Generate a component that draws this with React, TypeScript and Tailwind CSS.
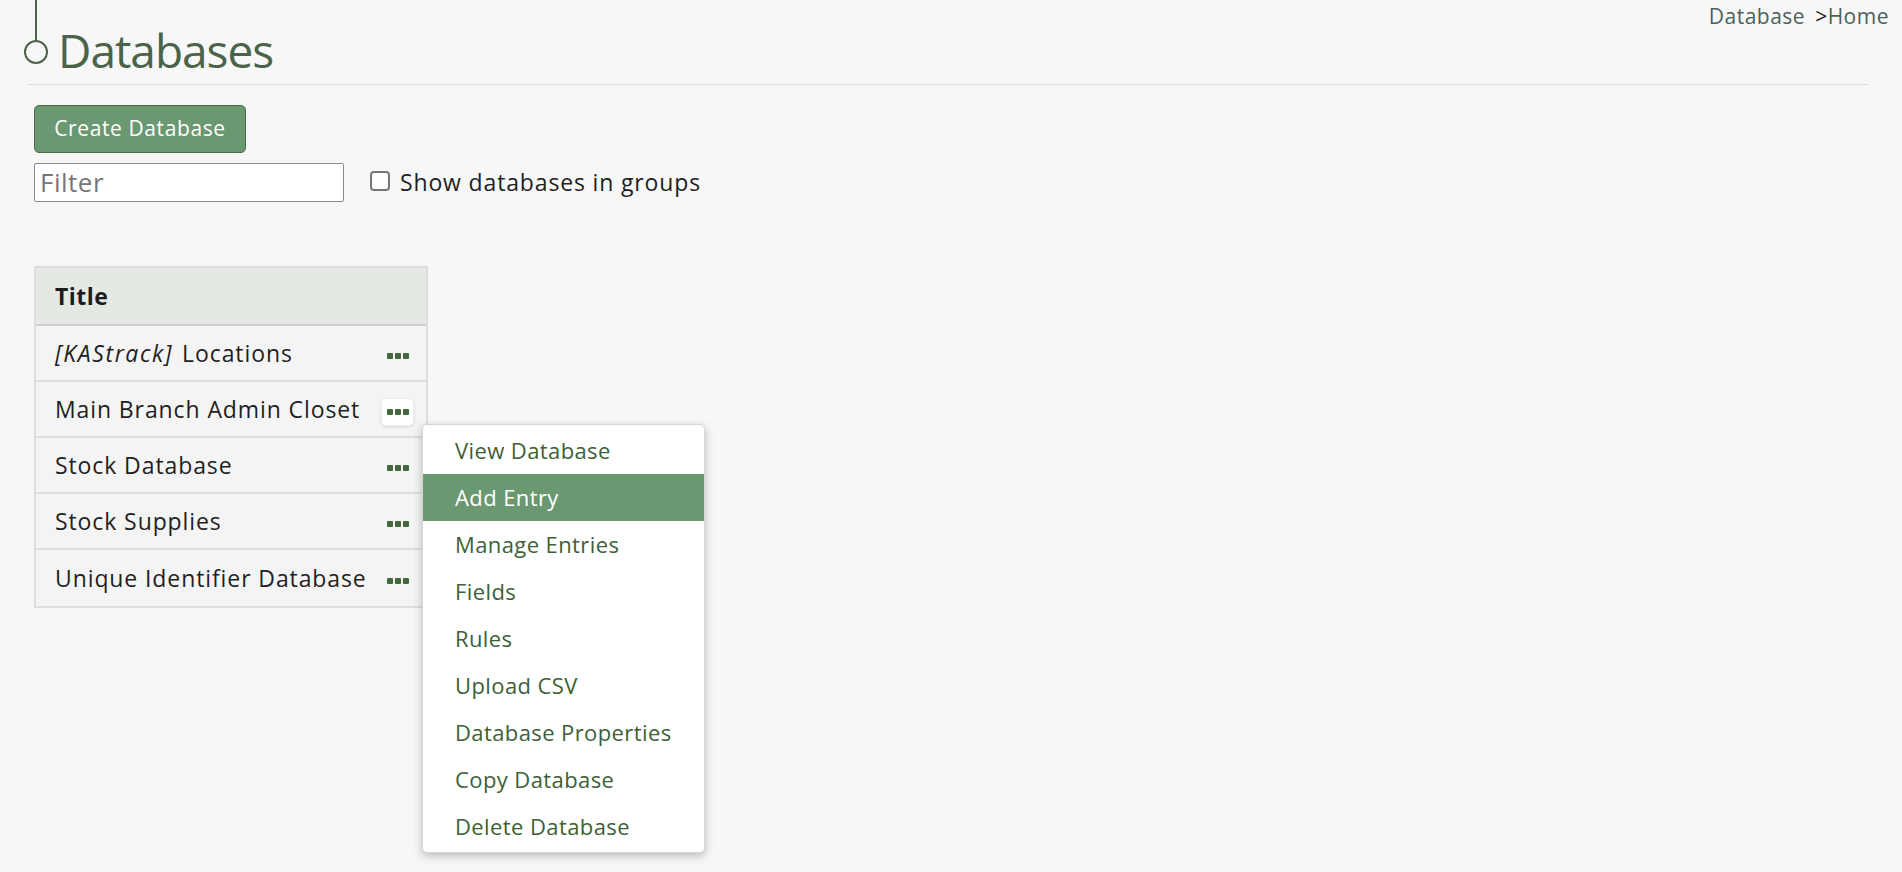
import { useState } from "react";

const databases = [
  { tag: "[KAStrack]", name: "Locations" },
  { name: "Main Branch Admin Closet" },
  { name: "Stock Database" },
  { name: "Stock Supplies" },
  { name: "Unique Identifier Database" },
];

const menuItems = [
  "View Database",
  "Add Entry",
  "Manage Entries",
  "Fields",
  "Rules",
  "Upload CSV",
  "Database Properties",
  "Copy Database",
  "Delete Database",
];

function Dots() {
  return (
    <svg width="22" height="6" viewBox="0 0 22 6" className="block">
      <rect x="0" y="0" width="6" height="6" rx="1" fill="#3f6a3c" />
      <rect x="8" y="0" width="6" height="6" rx="1" fill="#3f6a3c" />
      <rect x="16" y="0" width="6" height="6" rx="1" fill="#3f6a3c" />
    </svg>
  );
}

export default function App() {
  const [openRow] = useState(1);
  const [hovered, setHovered] = useState("Add Entry");

  return (
    <div className="min-h-[872px] bg-[#f7f7f7] font-['Open_Sans',sans-serif] text-[#1f1f1f]">
      {/* header */}
      <div className="flex justify-between pl-6 pr-[13px]">
        <div className="flex items-start">
          <div className="flex flex-col items-center">
            <div className="w-[2px] h-[40px] bg-[#4a6349]" />
            <div className="w-[24px] h-[24px] rounded-full border-2 border-[#4a6349]" />
          </div>
          <h1 className="ml-[10px] mt-[20px] text-[46px] leading-[60px] tracking-[-1px] text-[#4a6349]">Databases</h1>
        </div>
        <div className="pt-[1px] text-[21px] leading-[30px] tracking-[0.5px] text-[#4d6159]">
          Database <span className="ml-[4px] text-[#222]">&gt;</span>Home
        </div>
      </div>
      <div className="ml-[28px] mr-[34px] mt-[4px] border-t-[1.5px] border-[#dcdcdc]" />

      <div className="pl-[34px] pt-[20px]">
        <button className="h-[48px] w-[212px] rounded-[5px] border border-[#4a6a4d] bg-[#6a9871] text-[21px] tracking-[0.6px] text-white">
          Create Database
        </button>
        <div className="mt-[10px] flex items-center">
          <input
            placeholder="Filter"
            className="h-[39px] w-[310px] rounded-[2px] border border-[#8a8a8a] bg-white px-[5px] text-[26px] tracking-[0.5px] placeholder:text-[#767676] outline-none"
          />
          <label className="ml-[26px] flex items-center gap-[10px] text-[23px] tracking-[0.85px] text-[#1f1f1f]">
            <span className="mb-[4px] h-[20px] w-[20px] rounded-[4px] border-2 border-[#777] bg-white" />
            Show databases in groups
          </label>
        </div>

        {/* table */}
        <div className="relative mt-[64px] w-[394px]">
          <div className="border-2 border-[#dedede]">
            <div className="flex h-[58px] items-center border-b-2 border-[#cfcfcf] bg-[#e4e9e4] px-[19px] text-[23px] tracking-[0.5px] font-bold text-[#1c1c1c]">
              Title
            </div>
            {databases.map((db, i) => (
              <div
                key={db.name}
                className={`flex h-[56px] items-center justify-between bg-[#f4f4f4] pl-[19px] pr-[12px] text-[23px] tracking-[0.9px] ${i < databases.length - 1 ? "border-b-2 border-[#dedede]" : ""}`}
              >
                <span className="whitespace-nowrap">
                  {db.tag && <i className="mr-[9px] tracking-[1.6px]">{db.tag}</i>}
                  {db.name}
                </span>
                <span
                  className={`mt-[6px] flex h-[28px] w-[33px] items-center justify-center rounded-[5px] ${i === openRow ? "bg-white shadow-[0_1px_3px_rgba(0,0,0,0.12)] border border-[#eeeeee]" : ""}`}
                >
                  <Dots />
                </span>
              </div>
            ))}
          </div>

          {/* dropdown */}
          <div className="absolute left-[388px] top-[158px] w-[283px] rounded-[5px] border border-[#d6d6d6] bg-white py-[2px] shadow-[0_3px_10px_rgba(0,0,0,0.25)]">
            {menuItems.map((item) => (
              <div
                key={item}
                onMouseEnter={() => setHovered(item)}
                className={`flex h-[47px] items-center pl-[32px] text-[22px] tracking-[0.4px] ${hovered === item ? "bg-[#6a9871] text-white" : "text-[#3e5f37]"}`}
              >
                {item}
              </div>
            ))}
          </div>
        </div>
      </div>
    </div>
  );
}
